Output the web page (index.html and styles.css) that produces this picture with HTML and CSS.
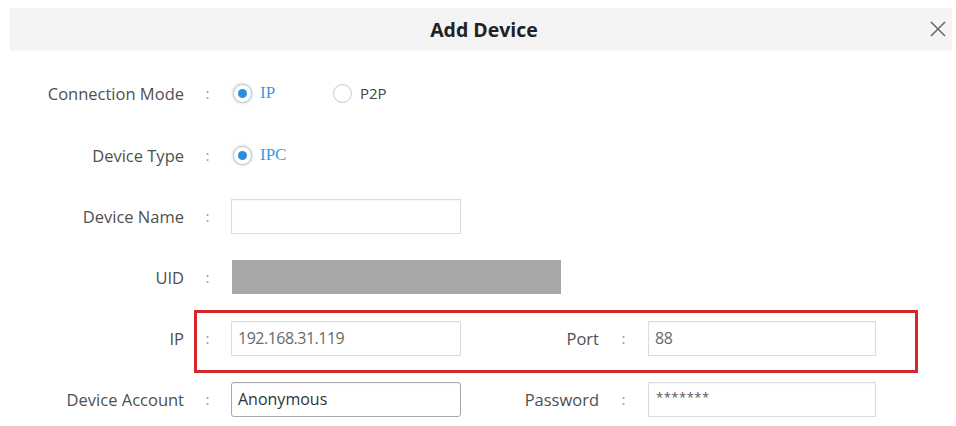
FILE: index.html
```html
<!DOCTYPE html>
<html lang="en">
<head>
<meta charset="utf-8">
<title>Add Device</title>
<link rel="stylesheet" href="styles.css">
</head>
<body>
<div class="dialog">
  <header class="titlebar">
    <h1 class="title">Add Device</h1>
    <button class="close" type="button" aria-label="Close">
      <svg viewBox="0 0 18 18" width="18" height="18"><path d="M2 2 L16 16 M16 2 L2 16" stroke="#6a6a6a" stroke-width="1.6" fill="none"/></svg>
    </button>
  </header>
  <div class="form">
    <div class="row">
      <span class="lbl">Connection Mode</span><span class="colon">:</span>
      <div class="ctrl radios">
        <span class="opt opt-first"><span class="radio on"></span><span class="opt-text sel">IP</span></span>
        <span class="opt"><span class="radio"></span><span class="opt-text">P2P</span></span>
      </div>
    </div>
    <div class="row">
      <span class="lbl">Device Type</span><span class="colon">:</span>
      <div class="ctrl radios">
        <span class="opt"><span class="radio on"></span><span class="opt-text sel">IPC</span></span>
      </div>
    </div>
    <div class="row">
      <span class="lbl">Device Name</span><span class="colon">:</span>
      <div class="ctrl"><div class="input"></div></div>
    </div>
    <div class="row">
      <span class="lbl">UID</span><span class="colon">:</span>
      <div class="ctrl ctrl-wide"><div class="uid"></div></div>
    </div>
    <div class="row row-mark">
      <span class="lbl">IP</span><span class="colon">:</span>
      <div class="ctrl"><div class="input num">192.168.31.119</div></div>
      <span class="lbl">Port</span><span class="colon">:</span>
      <div class="ctrl"><div class="input num">88</div></div>
      <div class="mark"></div>
    </div>
    <div class="row">
      <span class="lbl">Device Account</span><span class="colon">:</span>
      <div class="ctrl"><div class="input focus">Anonymous</div></div>
      <span class="lbl">Password</span><span class="colon">:</span>
      <div class="ctrl"><div class="input pass">*******</div></div>
    </div>
  </div>
</div>
</body>
</html>
```

FILE: styles.css
```css
* { box-sizing: border-box; }
html, body { margin: 0; background: #ffffff; }
body {
  font-family: "Open Sans", "Noto Sans", sans-serif;
  color: #4a4a4a;
  padding: 8px 4px 0 10px;
  width: 956px;
  height: 426px;
  overflow: hidden;
}
.titlebar {
  height: 42px;
  background: #f4f4f4;
  display: flex;
  align-items: center;
  justify-content: center;
  position: relative;
  box-shadow: 0 1px 2px rgba(0,0,0,0.03);
}
.title {
  margin: 0;
  font-size: 19.5px;
  font-weight: 700;
  color: #222;
  padding-left: 6px;
}
.close {
  position: absolute;
  right: 5px;
  top: 12px;
  border: 0;
  background: none;
  padding: 0;
  width: 18px;
  height: 18px;
  display: block;
}
.close svg { display: block; }
.form {
  margin-top: 25px;
  display: grid;
  row-gap: 25px;
}
.row {
  display: grid;
  grid-template-columns: 174px 47px 230px 138px 49px 228px;
  height: 36px;
  align-items: center;
  position: relative;
  font-size: 16.5px;
}
.row:nth-child(2) { margin-top: 1px; }
.lbl { text-align: right; color: #505050; }
.colon { text-align: center; color: #9a9a9a; font-size: 15px; }
.ctrl { height: 100%; display: flex; align-items: center; }
.ctrl-wide { grid-column: 3 / span 2; }
.radios { padding-left: 2px; }
.opt { display: inline-flex; align-items: center; }
.opt-first { width: 100px; }
.radio {
  width: 19px;
  height: 19px;
  border-radius: 50%;
  border: 1.5px solid #cfc8c2;
  background: #fff;
  display: inline-flex;
  align-items: center;
  justify-content: center;
  margin-right: 8px;
}
.radio.on { box-shadow: 0 0 3px rgba(90,160,225,0.6); }
.radio.on::after {
  content: "";
  width: 9px;
  height: 9px;
  border-radius: 50%;
  background: #2b8de2;
}
.opt-text { font-size: 15px; color: #444; }
.opt-text.sel { font-family: "Liberation Serif", serif; color: #3a9ad9; font-size: 17px; }
.input {
  width: 100%;
  height: 35px;
  border: 1px solid #dcdcdc;
  box-shadow: inset 0 1px 1px rgba(0,0,0,0.04);
  background: #fff;
  padding-left: 6px;
  display: flex;
  align-items: center;
  color: #333;
  font-size: 16px;
}
.input.num { color: #6a6a6a; font-size: 16px; letter-spacing: -0.5px; }
.input.focus { border-color: #a8a8a8; border-radius: 3px; }
.input.pass { color: #555; font-size: 13px; letter-spacing: 0.5px; padding-left: 7px; padding-bottom: 5px; }
.uid {
  width: 329px;
  height: 34px;
  background: #a7a7a7;
  margin-left: 1px;
}
.mark {
  position: absolute;
  left: 184px;
  top: -10px;
  width: 724px;
  height: 63px;
  border: 3px solid #d4262a;
  pointer-events: none;
}
```
